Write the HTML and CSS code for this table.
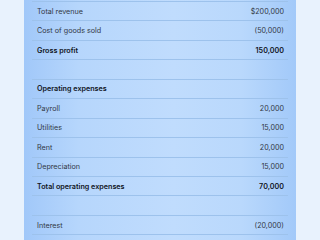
FILE: index.html
```
<!DOCTYPE html>
<html>
<head>
<meta charset="utf-8">
<link rel="stylesheet" href="styles.css">
</head>
<body>
<div class="panel">
  <div class="table">
    <div class="row"><span>Total revenue</span><span>$200,000</span></div>
    <div class="row"><span>Cost of goods sold</span><span>(50,000)</span></div>
    <div class="row strong"><span>Gross profit</span><span>150,000</span></div>
    <div class="row"></div>
    <div class="row strong"><span>Operating expenses</span></div>
    <div class="row"><span>Payroll</span><span>20,000</span></div>
    <div class="row"><span>Utilities</span><span>15,000</span></div>
    <div class="row"><span>Rent</span><span>20,000</span></div>
    <div class="row"><span>Depreciation</span><span>15,000</span></div>
    <div class="row strong"><span>Total operating expenses</span><span>70,000</span></div>
    <div class="row"></div>
    <div class="row"><span>Interest</span><span>(20,000)</span></div>
    <div class="row"></div>
  </div>
</div>
</body>
</html>
```
FILE: styles.css
```
html, body {
  margin: 0;
  padding: 0;
  height: 240px;
  overflow: hidden;
  background: #e8f2fd;
}
body {
  padding: 0 24px;
  font-family: Inter, "Liberation Sans", sans-serif;
  font-size: 7.2px;
  color: #323845;
}
.panel {
  height: 240px;
  padding: 1px 8px 0;
  box-sizing: border-box;
  overflow: hidden;
  background: linear-gradient(90deg, #a1c8f9 0%, #b6d6fc 20%, #c0dcfd 55%, #b9d8fc 80%, #a2c9f9 100%);
}
.table {
  border-top: 1px solid #9dc2ec;
}
.row {
  display: flex;
  justify-content: space-between;
  align-items: center;
  height: 19.45px;
  box-sizing: border-box;
  padding: 0 4px 0 5px;
  border-bottom: 1px solid #9dc2ec;
}
.strong {
  font-weight: 600;
  color: #10141c;
}
```
